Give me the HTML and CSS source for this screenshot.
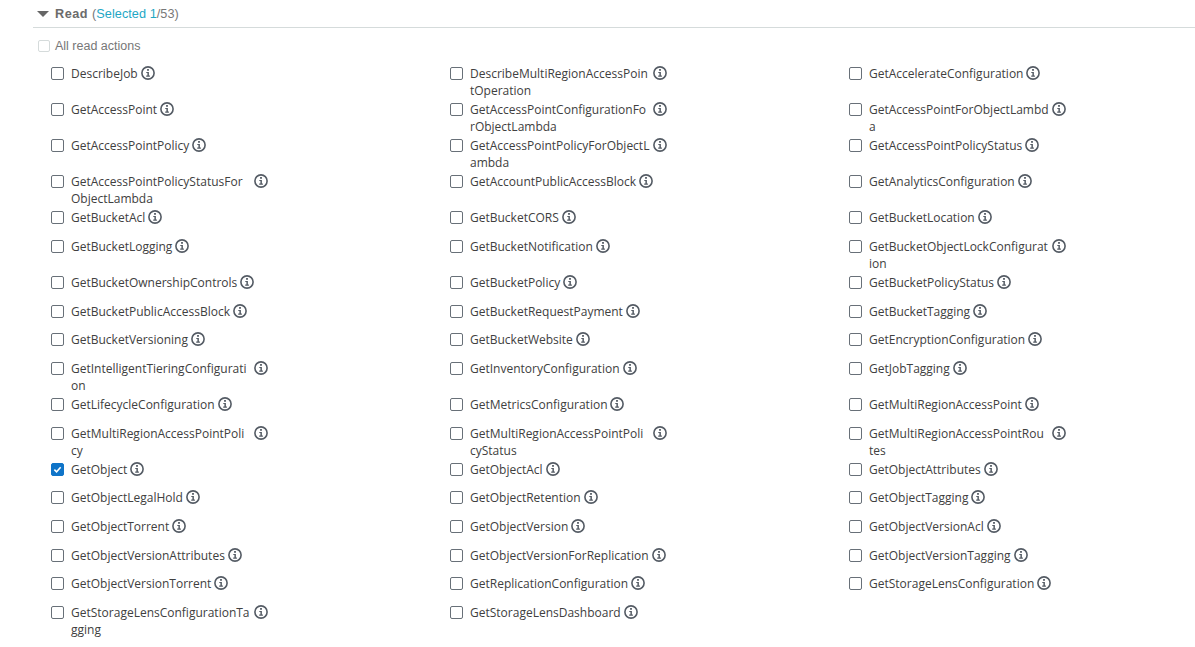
FILE: index.html
```html
<!DOCTYPE html>
<html lang="en">
<head>
<meta charset="utf-8">
<title>Read actions</title>
<link rel="stylesheet" href="styles.css">
</head>
<body>
<svg class="defs" width="0" height="0" aria-hidden="true"><symbol id="info" viewBox="0 0 14 14"><circle cx="7" cy="7" r="6.1" fill="none" stroke="currentColor" stroke-width="1.6"/><rect x="6.1" y="3" width="1.8" height="1.8" fill="currentColor"/><path d="M5.3 6h2.6v3.6h1v1.1H5.2V9.6h1.2V7.1H5.3z" fill="currentColor"/></symbol></svg>
<header class="head"><span class="tri"></span><b>Read</b> <span class="paren">(<span class="sel">Selected 1</span>/53)</span></header>
<div class="all"><span class="allbox"></span>All read actions</div>
<div class="grid">
<div class="item"><span class="box"></span><span class="txt">DescribeJob</span><svg class="i"><use href="#info"/></svg></div>
<div class="item"><span class="box"></span><span class="txt">DescribeMultiRegionAccessPoin<wbr>tOperation</span><svg class="i"><use href="#info"/></svg></div>
<div class="item"><span class="box"></span><span class="txt">GetAccelerateConfiguration</span><svg class="i"><use href="#info"/></svg></div>
<div class="item"><span class="box"></span><span class="txt">GetAccessPoint</span><svg class="i"><use href="#info"/></svg></div>
<div class="item"><span class="box"></span><span class="txt">GetAccessPointConfigurationFo<wbr>rObjectLambda</span><svg class="i"><use href="#info"/></svg></div>
<div class="item"><span class="box"></span><span class="txt">GetAccessPointForObjectLambd<wbr>a</span><svg class="i"><use href="#info"/></svg></div>
<div class="item"><span class="box"></span><span class="txt">GetAccessPointPolicy</span><svg class="i"><use href="#info"/></svg></div>
<div class="item"><span class="box"></span><span class="txt">GetAccessPointPolicyForObjectL<wbr>ambda</span><svg class="i"><use href="#info"/></svg></div>
<div class="item"><span class="box"></span><span class="txt">GetAccessPointPolicyStatus</span><svg class="i"><use href="#info"/></svg></div>
<div class="item"><span class="box"></span><span class="txt">GetAccessPointPolicyStatusFor<wbr>ObjectLambda</span><svg class="i"><use href="#info"/></svg></div>
<div class="item"><span class="box"></span><span class="txt">GetAccountPublicAccessBlock</span><svg class="i"><use href="#info"/></svg></div>
<div class="item"><span class="box"></span><span class="txt">GetAnalyticsConfiguration</span><svg class="i"><use href="#info"/></svg></div>
<div class="item"><span class="box"></span><span class="txt">GetBucketAcl</span><svg class="i"><use href="#info"/></svg></div>
<div class="item"><span class="box"></span><span class="txt">GetBucketCORS</span><svg class="i"><use href="#info"/></svg></div>
<div class="item"><span class="box"></span><span class="txt">GetBucketLocation</span><svg class="i"><use href="#info"/></svg></div>
<div class="item"><span class="box"></span><span class="txt">GetBucketLogging</span><svg class="i"><use href="#info"/></svg></div>
<div class="item"><span class="box"></span><span class="txt">GetBucketNotification</span><svg class="i"><use href="#info"/></svg></div>
<div class="item"><span class="box"></span><span class="txt">GetBucketObjectLockConfigurat<wbr>ion</span><svg class="i"><use href="#info"/></svg></div>
<div class="item"><span class="box"></span><span class="txt">GetBucketOwnershipControls</span><svg class="i"><use href="#info"/></svg></div>
<div class="item"><span class="box"></span><span class="txt">GetBucketPolicy</span><svg class="i"><use href="#info"/></svg></div>
<div class="item"><span class="box"></span><span class="txt">GetBucketPolicyStatus</span><svg class="i"><use href="#info"/></svg></div>
<div class="item"><span class="box"></span><span class="txt">GetBucketPublicAccessBlock</span><svg class="i"><use href="#info"/></svg></div>
<div class="item"><span class="box"></span><span class="txt">GetBucketRequestPayment</span><svg class="i"><use href="#info"/></svg></div>
<div class="item"><span class="box"></span><span class="txt">GetBucketTagging</span><svg class="i"><use href="#info"/></svg></div>
<div class="item"><span class="box"></span><span class="txt">GetBucketVersioning</span><svg class="i"><use href="#info"/></svg></div>
<div class="item"><span class="box"></span><span class="txt">GetBucketWebsite</span><svg class="i"><use href="#info"/></svg></div>
<div class="item"><span class="box"></span><span class="txt">GetEncryptionConfiguration</span><svg class="i"><use href="#info"/></svg></div>
<div class="item"><span class="box"></span><span class="txt">GetIntelligentTieringConfigurati<wbr>on</span><svg class="i"><use href="#info"/></svg></div>
<div class="item"><span class="box"></span><span class="txt">GetInventoryConfiguration</span><svg class="i"><use href="#info"/></svg></div>
<div class="item"><span class="box"></span><span class="txt">GetJobTagging</span><svg class="i"><use href="#info"/></svg></div>
<div class="item"><span class="box"></span><span class="txt">GetLifecycleConfiguration</span><svg class="i"><use href="#info"/></svg></div>
<div class="item"><span class="box"></span><span class="txt">GetMetricsConfiguration</span><svg class="i"><use href="#info"/></svg></div>
<div class="item"><span class="box"></span><span class="txt">GetMultiRegionAccessPoint</span><svg class="i"><use href="#info"/></svg></div>
<div class="item"><span class="box"></span><span class="txt">GetMultiRegionAccessPointPoli<wbr>cy</span><svg class="i"><use href="#info"/></svg></div>
<div class="item"><span class="box"></span><span class="txt">GetMultiRegionAccessPointPoli<wbr>cyStatus</span><svg class="i"><use href="#info"/></svg></div>
<div class="item"><span class="box"></span><span class="txt">GetMultiRegionAccessPointRou<wbr>tes</span><svg class="i"><use href="#info"/></svg></div>
<div class="item"><span class="box checked"><svg viewBox="0 0 14 14"><path d="M3 7.2l2.8 2.8L11 4.2" fill="none" stroke="#fff" stroke-width="2"/></svg></span><span class="txt">GetObject</span><svg class="i"><use href="#info"/></svg></div>
<div class="item"><span class="box"></span><span class="txt">GetObjectAcl</span><svg class="i"><use href="#info"/></svg></div>
<div class="item"><span class="box"></span><span class="txt">GetObjectAttributes</span><svg class="i"><use href="#info"/></svg></div>
<div class="item"><span class="box"></span><span class="txt">GetObjectLegalHold</span><svg class="i"><use href="#info"/></svg></div>
<div class="item"><span class="box"></span><span class="txt">GetObjectRetention</span><svg class="i"><use href="#info"/></svg></div>
<div class="item"><span class="box"></span><span class="txt">GetObjectTagging</span><svg class="i"><use href="#info"/></svg></div>
<div class="item"><span class="box"></span><span class="txt">GetObjectTorrent</span><svg class="i"><use href="#info"/></svg></div>
<div class="item"><span class="box"></span><span class="txt">GetObjectVersion</span><svg class="i"><use href="#info"/></svg></div>
<div class="item"><span class="box"></span><span class="txt">GetObjectVersionAcl</span><svg class="i"><use href="#info"/></svg></div>
<div class="item"><span class="box"></span><span class="txt">GetObjectVersionAttributes</span><svg class="i"><use href="#info"/></svg></div>
<div class="item"><span class="box"></span><span class="txt">GetObjectVersionForReplication</span><svg class="i"><use href="#info"/></svg></div>
<div class="item"><span class="box"></span><span class="txt">GetObjectVersionTagging</span><svg class="i"><use href="#info"/></svg></div>
<div class="item"><span class="box"></span><span class="txt">GetObjectVersionTorrent</span><svg class="i"><use href="#info"/></svg></div>
<div class="item"><span class="box"></span><span class="txt">GetReplicationConfiguration</span><svg class="i"><use href="#info"/></svg></div>
<div class="item"><span class="box"></span><span class="txt">GetStorageLensConfiguration</span><svg class="i"><use href="#info"/></svg></div>
<div class="item"><span class="box"></span><span class="txt">GetStorageLensConfigurationTa<wbr>gging</span><svg class="i"><use href="#info"/></svg></div>
<div class="item"><span class="box"></span><span class="txt">GetStorageLensDashboard</span><svg class="i"><use href="#info"/></svg></div>
</div>
</body>
</html>
```
FILE: styles.css
```css
html, body { margin: 0; padding: 0; background: #fff; }
body { height: 647px; overflow: hidden; font-family: "Open Sans", sans-serif; font-size: 12px; color: #444; }
.defs { position: absolute; }
.head { display: flex; align-items: center; gap: 4px; height: 26px; margin-left: 33px; padding: 1px 0 0 4px; border-bottom: 1px solid #d5dbdb; font-family: "Liberation Sans", sans-serif; font-size: 12.7px; color: #777; }
.head b { color: #6b6b6b; margin-left: 2px; letter-spacing: 0.5px; }
.paren { letter-spacing: 0.05px; }
.tri { width: 0; height: 0; border-left: 6px solid transparent; border-right: 6px solid transparent; border-top: 6px solid #666; }
.sel { color: #1ea7c5; }
.all { display: flex; align-items: center; gap: 5px; height: 36px; margin-left: 38px; font-family: "Liberation Sans", sans-serif; font-size: 12.5px; color: #777; }
.allbox { width: 10px; height: 10px; border: 1px solid #d5dbdb; border-radius: 2px; }
.grid { display: grid; grid-template-columns: repeat(3, 399px); margin-left: 51px; padding-top: 1.3px; grid-auto-rows: minmax(28.67px, auto); }
.item { display: flex; align-items: flex-start; }
.box { flex: none; width: 11px; height: 11px; margin: 2px 7px 0 0; border: 1px solid #687078; border-radius: 2px; }
.box.checked { background: #0f74c8; border-color: #0f74c8; display: flex; }
.box.checked svg { width: 11px; height: 11px; }
.txt { max-width: 180px; padding: 0 0 2px; line-height: 17px; color: #404040; }
.i { flex: none; width: 14px; height: 14px; margin: 1px 0 0 3px; color: #545b64; }
```
